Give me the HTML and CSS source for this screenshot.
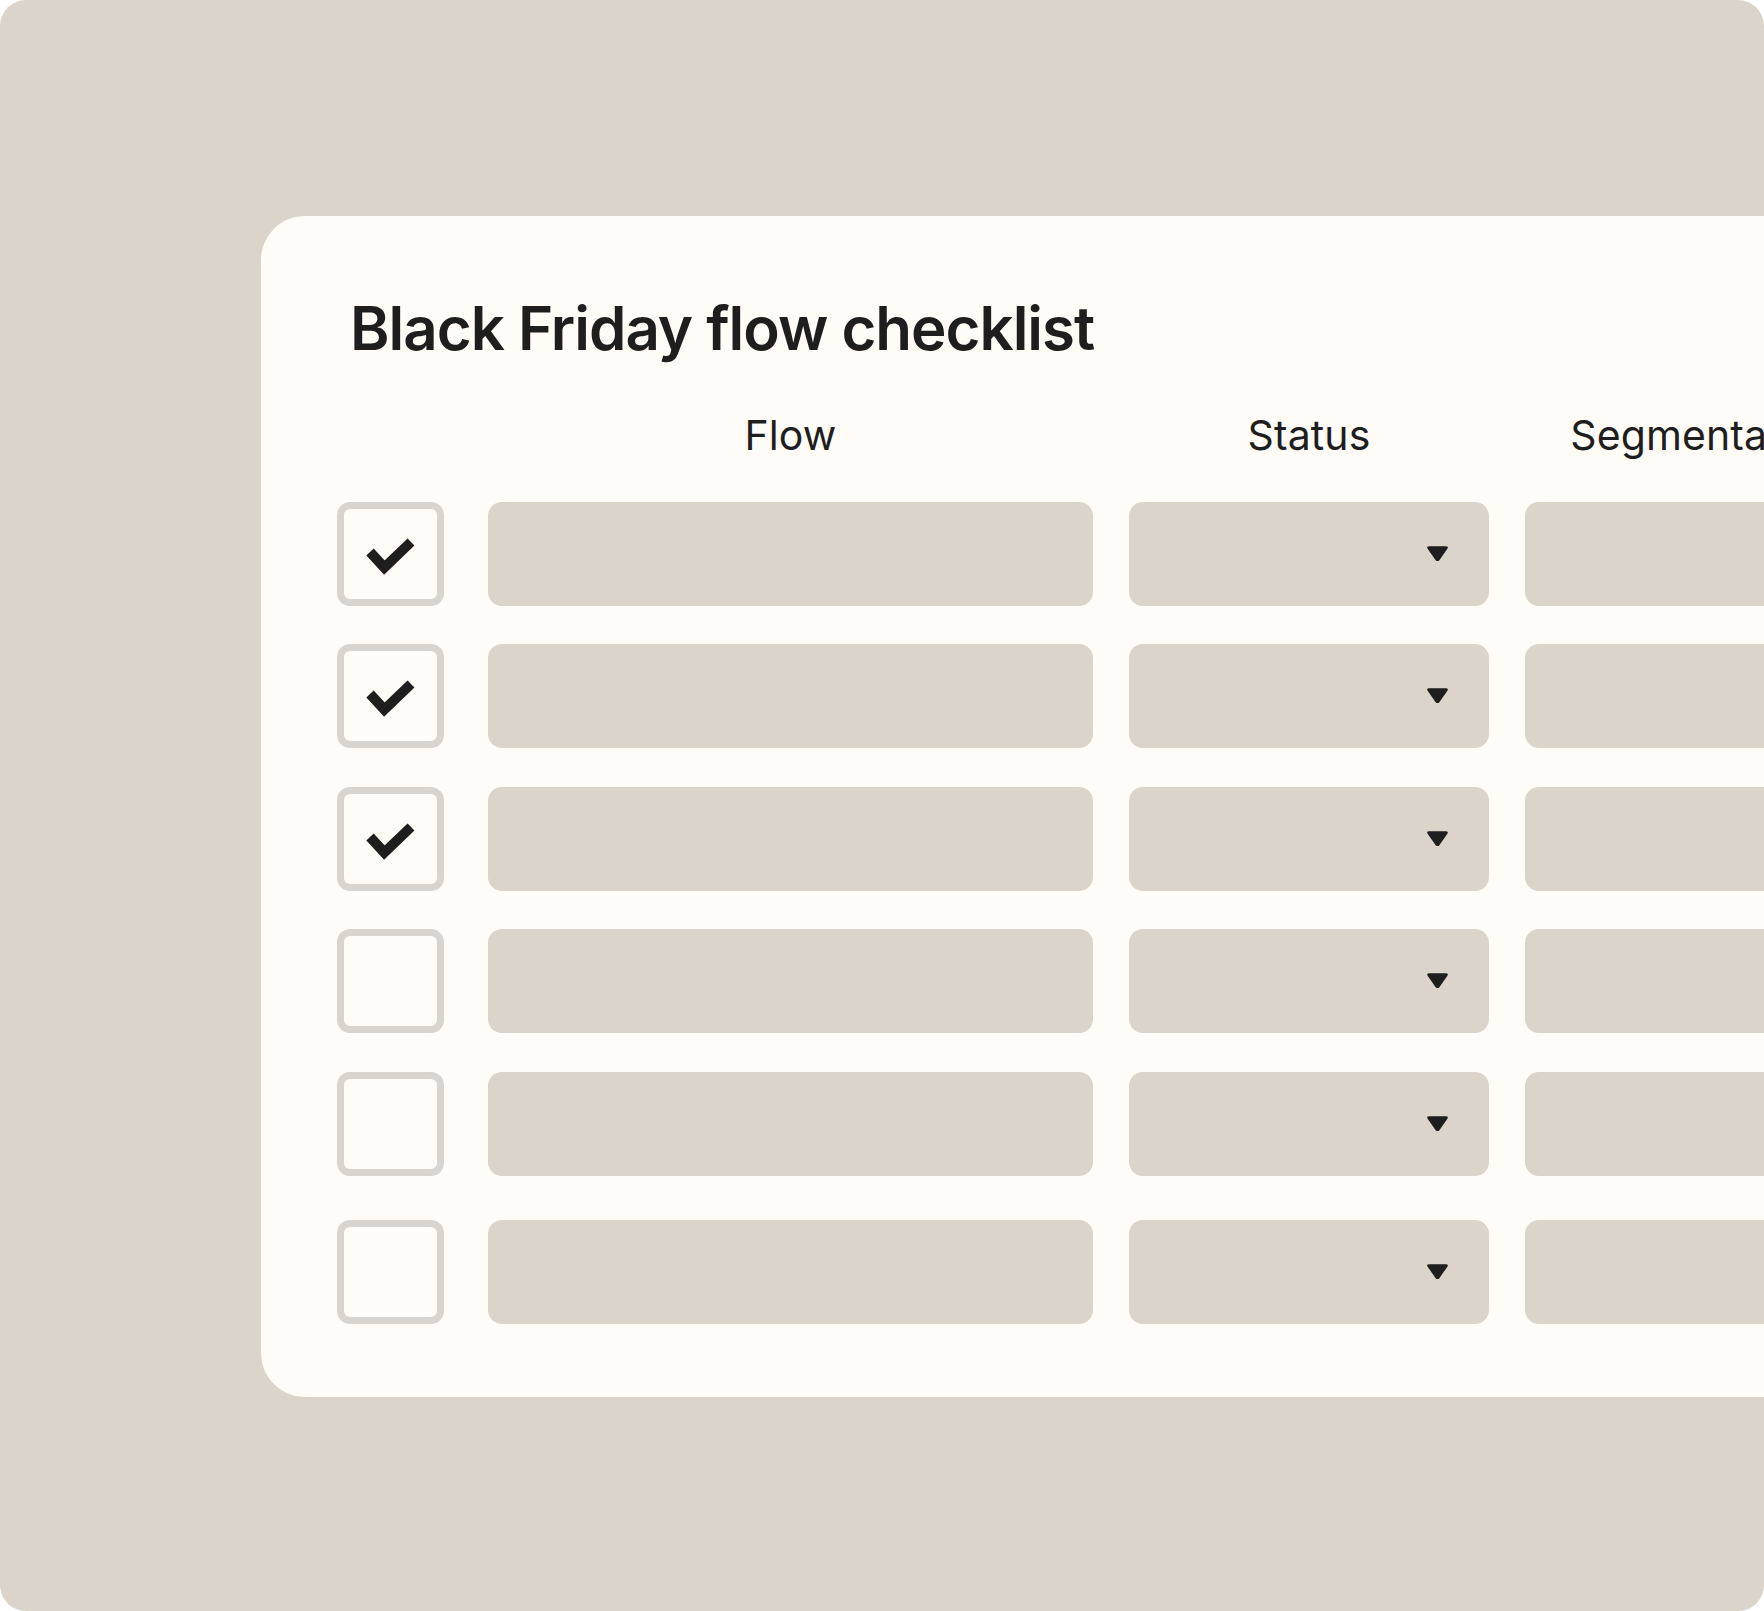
FILE: index.html
```html
<!DOCTYPE html>
<html lang="en">
<head>
<meta charset="utf-8">
<title>Black Friday flow checklist</title>
<link rel="stylesheet" href="styles.css">
</head>
<body>
<div class="frame">
  <section class="card">
    <h1 class="title">Black Friday flow checklist</h1>
    <div class="head-row">
      <div class="col-check"></div>
      <div class="col-flow head">Flow</div>
      <div class="col-status head">Status</div>
      <div class="col-seg head">Segmentation</div>
    </div>
    <div class="rows">
      <div class="row">
        <div class="col-check box"><svg viewBox="0 0 93 90" width="93" height="90"><path d="M26 43 L40.3 58.5 L67 33" fill="none" stroke="#1e1e1e" stroke-width="10" stroke-linejoin="miter"/></svg></div>
        <div class="col-flow field"></div>
        <div class="col-status field select"><svg class="caret" viewBox="0 0 22 15" width="23" height="16"><path d="M3 0 H19 Q22 0 20.3 2.6 L12.6 13.6 Q11 15 9.4 13.6 L1.7 2.6 Q0 0 3 0 Z" fill="#1e1e1e"/></svg></div>
        <div class="col-seg field"></div>
      </div>
      <div class="row">
        <div class="col-check box"><svg viewBox="0 0 93 90" width="93" height="90"><path d="M26 43 L40.3 58.5 L67 33" fill="none" stroke="#1e1e1e" stroke-width="10" stroke-linejoin="miter"/></svg></div>
        <div class="col-flow field"></div>
        <div class="col-status field select"><svg class="caret" viewBox="0 0 22 15" width="23" height="16"><path d="M3 0 H19 Q22 0 20.3 2.6 L12.6 13.6 Q11 15 9.4 13.6 L1.7 2.6 Q0 0 3 0 Z" fill="#1e1e1e"/></svg></div>
        <div class="col-seg field"></div>
      </div>
      <div class="row">
        <div class="col-check box"><svg viewBox="0 0 93 90" width="93" height="90"><path d="M26 43 L40.3 58.5 L67 33" fill="none" stroke="#1e1e1e" stroke-width="10" stroke-linejoin="miter"/></svg></div>
        <div class="col-flow field"></div>
        <div class="col-status field select"><svg class="caret" viewBox="0 0 22 15" width="23" height="16"><path d="M3 0 H19 Q22 0 20.3 2.6 L12.6 13.6 Q11 15 9.4 13.6 L1.7 2.6 Q0 0 3 0 Z" fill="#1e1e1e"/></svg></div>
        <div class="col-seg field"></div>
      </div>
      <div class="row">
        <div class="col-check box"></div>
        <div class="col-flow field"></div>
        <div class="col-status field select"><svg class="caret" viewBox="0 0 22 15" width="23" height="16"><path d="M3 0 H19 Q22 0 20.3 2.6 L12.6 13.6 Q11 15 9.4 13.6 L1.7 2.6 Q0 0 3 0 Z" fill="#1e1e1e"/></svg></div>
        <div class="col-seg field"></div>
      </div>
      <div class="row">
        <div class="col-check box"></div>
        <div class="col-flow field"></div>
        <div class="col-status field select"><svg class="caret" viewBox="0 0 22 15" width="23" height="16"><path d="M3 0 H19 Q22 0 20.3 2.6 L12.6 13.6 Q11 15 9.4 13.6 L1.7 2.6 Q0 0 3 0 Z" fill="#1e1e1e"/></svg></div>
        <div class="col-seg field"></div>
      </div>
      <div class="row row-last">
        <div class="col-check box"></div>
        <div class="col-flow field"></div>
        <div class="col-status field select"><svg class="caret" viewBox="0 0 22 15" width="23" height="16"><path d="M3 0 H19 Q22 0 20.3 2.6 L12.6 13.6 Q11 15 9.4 13.6 L1.7 2.6 Q0 0 3 0 Z" fill="#1e1e1e"/></svg></div>
        <div class="col-seg field"></div>
      </div>
    </div>
  </section>
</div>
</body>
</html>
```

FILE: styles.css
```css
* { box-sizing: border-box; }

html, body {
  margin: 0;
  padding: 0;
  background: #ffffff;
}

body {
  font-family: Inter, "Liberation Sans", sans-serif;
  color: #1e1e1e;
}

.frame {
  width: 1764px;
  height: 1611px;
  background: #dbd4ca;
  border-radius: 26px;
  overflow: hidden;
  padding-top: 216px;
  padding-left: 261px;
}

.card {
  width: 1503px;
  height: 1181px;
  background: #fffcf8;
  border-radius: 44px 0 0 44px;
  padding: 82px 0 0 76px;
  overflow: hidden;
}

.title {
  margin: 0 0 0 13px;
  font-size: 60px;
  line-height: 60px;
  height: 60px;
  font-weight: 600;
  letter-spacing: -1px;
  white-space: nowrap;
}

.head-row {
  display: flex;
  margin-top: 56px;
  height: 42px;
}

.head {
  font-size: 41px;
  line-height: 42px;
  font-weight: 400;
  text-align: center;
  white-space: nowrap;
  letter-spacing: 0.1px;
}

.rows {
  margin-top: 45.5px;
  display: flex;
  flex-direction: column;
  gap: 38.5px;
}

.row {
  display: flex;
  height: 104px;
}

.row-last {
  margin-top: 5.5px;
}

.col-check {
  flex: 0 0 107px;
  margin-right: 44px;
}

.col-flow {
  flex: 0 0 605px;
  margin-right: 36px;
}

.col-status {
  flex: 0 0 360px;
  margin-right: 36px;
}

.col-seg {
  flex: 0 0 360px;
}

.box {
  height: 104px;
  border: 7px solid #d9d4cd;
  border-radius: 13px;
  background: #fffcf8;
}

.box svg {
  display: block;
}

.field {
  height: 104px;
  background: #dbd4ca;
  border-radius: 14px;
}

.select {
  display: flex;
  align-items: center;
  justify-content: flex-end;
  padding-right: 40px;
}

.caret {
  display: block;
}
```
